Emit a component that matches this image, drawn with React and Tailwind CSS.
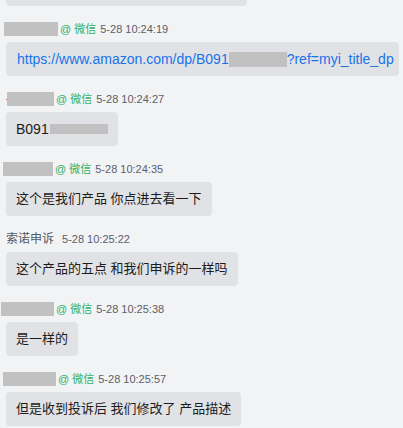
const latin = "font-['Segoe_UI','Liberation_Sans','Noto_Sans_CJK_SC',sans-serif]";

const messages = [
  { mask: [4, 54], ts: '5-28 10:24:19', link: true },
  { mask: [7, 47], ts: '5-28 10:24:27', code: true, red: true },
  { mask: [3, 50], ts: '5-28 10:24:35', text: '这个是我们产品 你点进去看一下' },
  { name: '索诺申诉', ts: '5-28 10:25:22', text: '这个产品的五点 和我们申诉的一样吗' },
  { mask: [1, 53], ts: '5-28 10:25:38', text: '是一样的' },
  { mask: [3, 53], ts: '5-28 10:25:57', text: '但是收到投诉后 我们修改了 产品描述' },
];

function Header({ m }) {
  if (m.name) {
    return (
      <div className="flex h-4 items-center pl-[6px] leading-4">
        <span className="text-[12px] text-[#555a60]">{m.name}</span>
        <span className="ml-2 text-[11px] text-[#5b6068]">{m.ts}</span>
      </div>
    );
  }
  const w = m.mask[1];
  return (
    <div className="flex h-4 items-center text-[11px] leading-4">
      <div className="relative h-[14px]" style={{ width: m.mask[0] + w }}>
        {m.red && <span className="absolute left-[6px] top-[7px] h-px w-[2px] bg-[#d9534f]" />}
        <span className="absolute top-0 h-[14px] bg-[#c1c1c1]" style={{ left: m.mask[0], width: w }} />
      </div>
      <span className="ml-[2px] text-[#2fb165]">@ 微信</span>
      <span className="ml-[4px] text-[#5b6068]">{m.ts}</span>
    </div>
  );
}

function Bubble({ children, className = '' }) {
  return (
    <div className={`flex h-[34px] items-center self-start rounded-[4px] bg-[#e1e2e6] px-[10px] text-[13px] text-[#1c1c1c] ${className}`}>
      {children}
    </div>
  );
}

export default function App() {
  return (
    <div className={`h-[428px] w-[403px] overflow-hidden bg-[#f2f3f5] ${latin}`}>
      <div className="ml-[6px] mt-[-28px] h-[34px] w-[241px] rounded-[4px] bg-[#e1e2e6]" />
      <div className="flex flex-col gap-[15px] pt-[15px]">
        {messages.map((m, i) => (
          <div key={i} className="flex flex-col gap-[5px]">
            <Header m={m} />
            <div className="flex pl-[6px]">
              {m.link && (
                <Bubble className="w-[393px] overflow-hidden whitespace-nowrap pl-[11px] text-[14px]">
                  <span className="flex items-center text-[#1a73e8]">
                    https://www.amazon.com/dp/B091
                    <span className="inline-block h-[15px] w-[58px] bg-[#c1c1c1]" />
                    ?ref=myi_title_dp
                  </span>
                </Bubble>
              )}
              {m.code && (
                <Bubble className="text-[14px]">
                  B091
                  <span className="ml-px inline-block h-[10px] w-[58px] bg-[#c1c1c1]" />
                </Bubble>
              )}
              {m.text && <Bubble>{m.text}</Bubble>}
            </div>
          </div>
        ))}
      </div>
    </div>
  );
}
